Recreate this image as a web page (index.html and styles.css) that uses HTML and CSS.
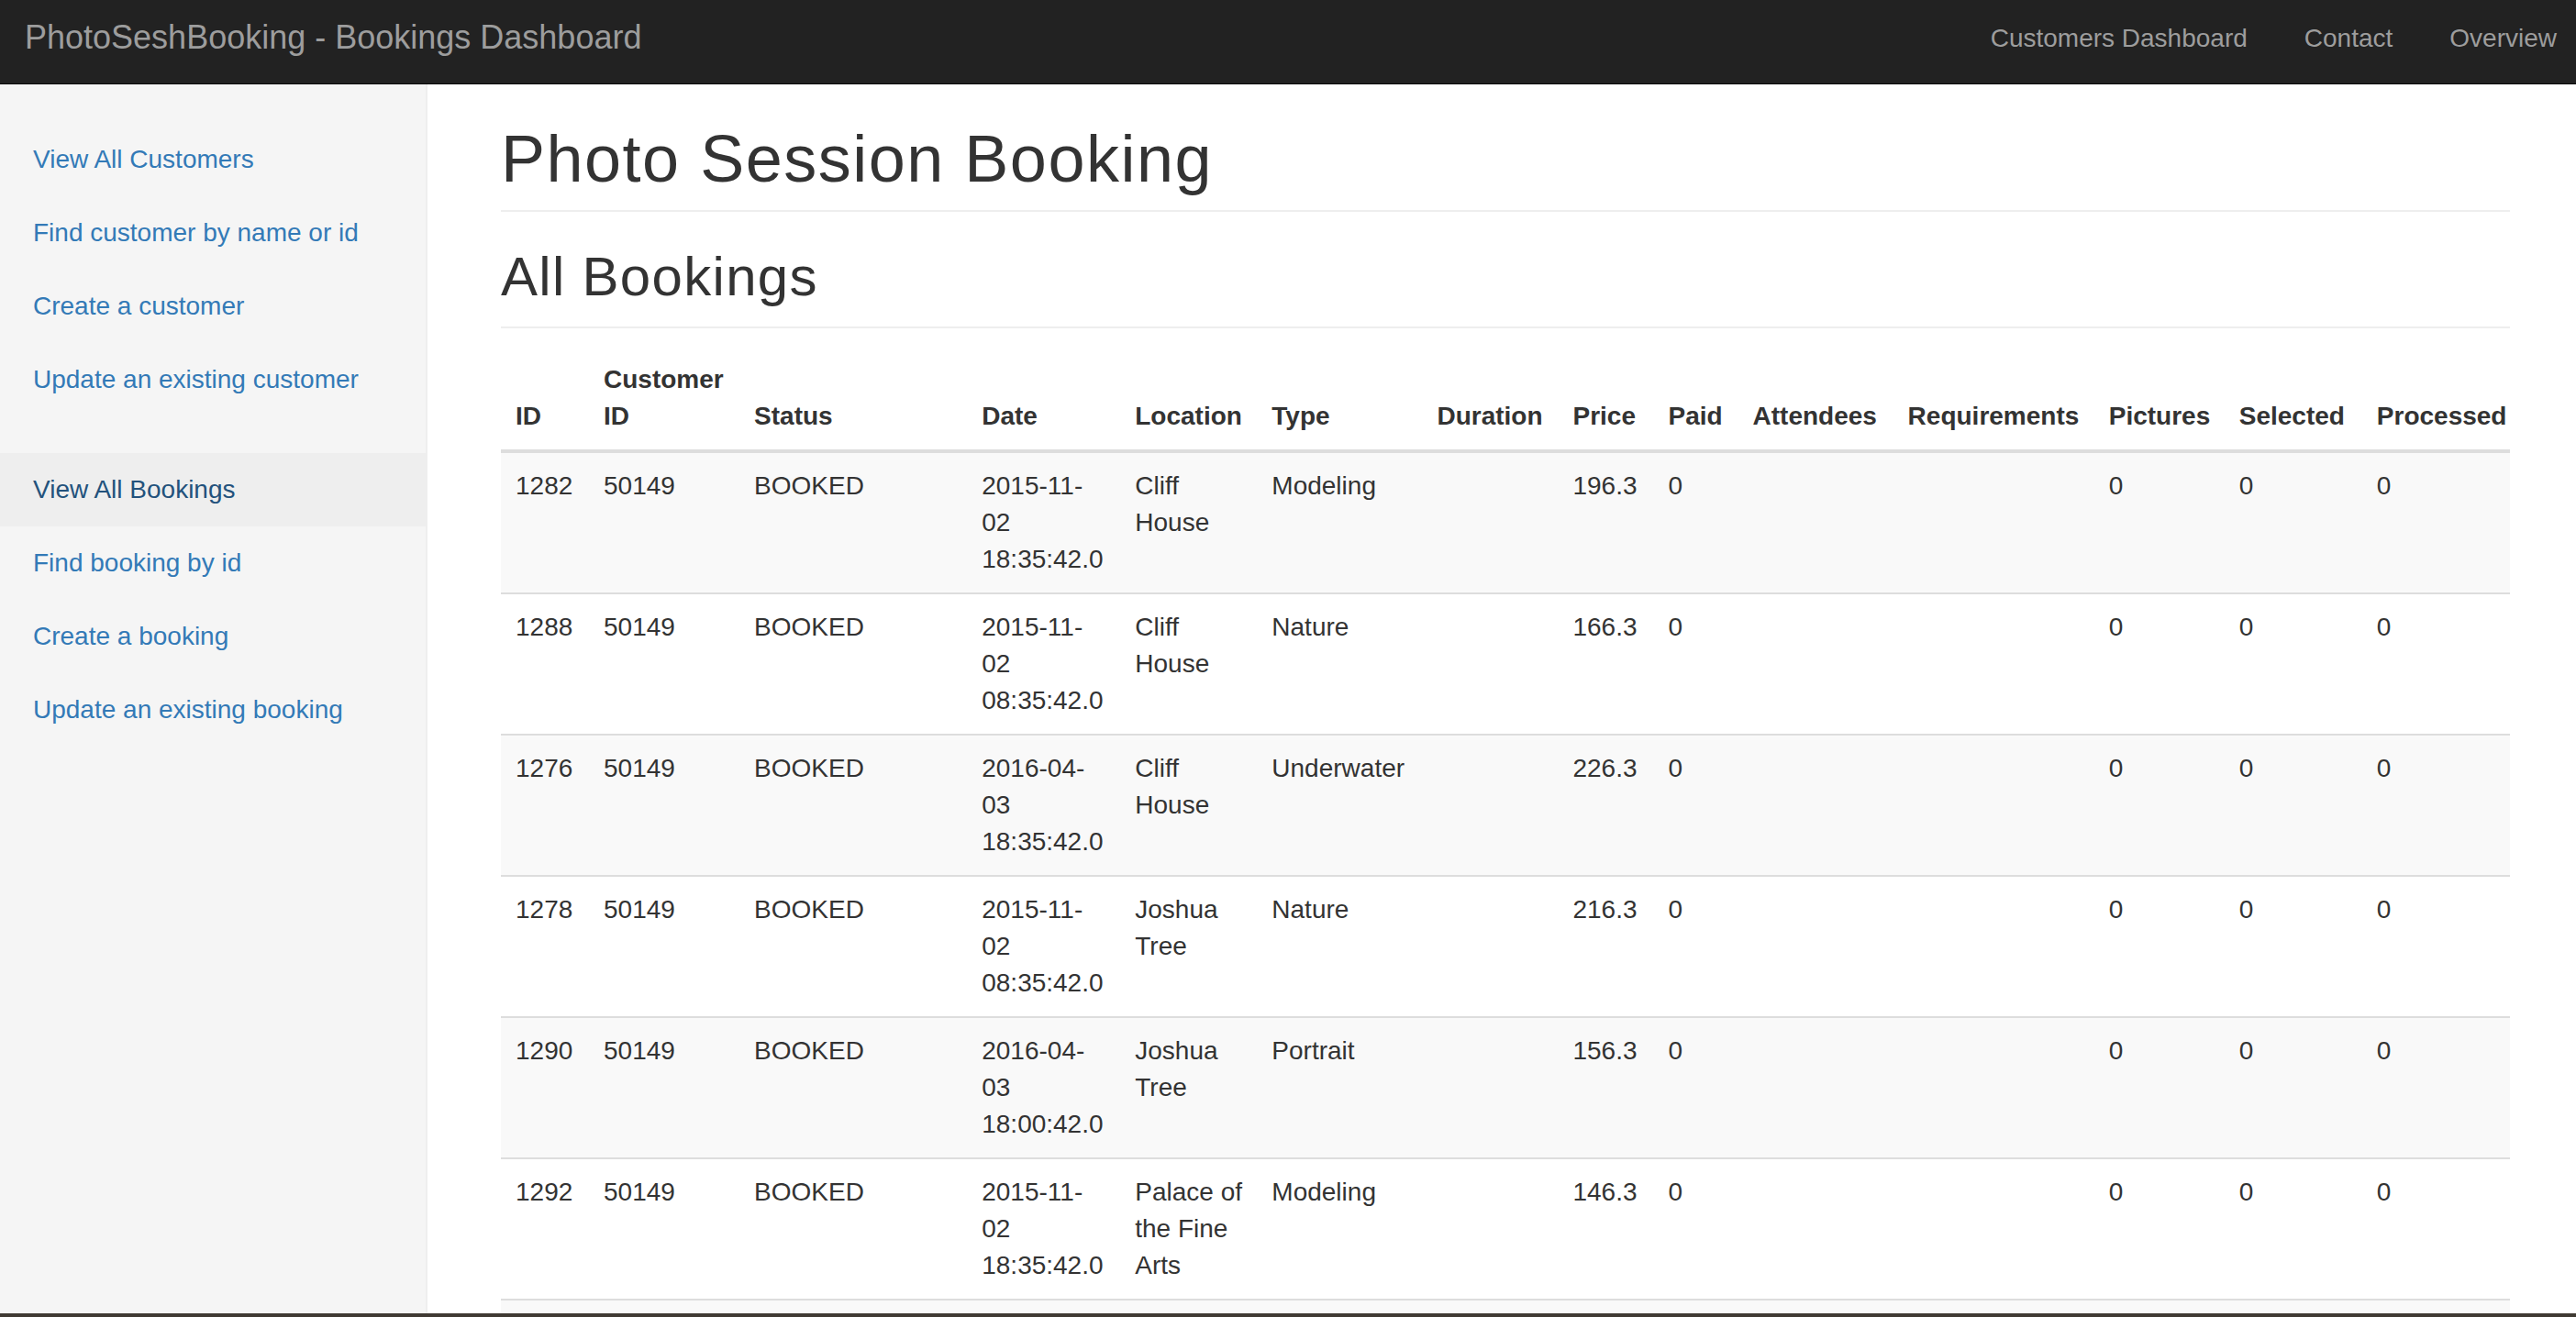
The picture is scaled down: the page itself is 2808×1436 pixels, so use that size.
FILE: index.html
```html
<!DOCTYPE html>
<html lang="en">
<head>
<meta charset="utf-8">
<title>PhotoSeshBooking - Bookings Dashboard</title>
<link rel="stylesheet" href="styles.css">
</head>
<body>
<header class="navbar">
  <a class="brand" href="#">PhotoSeshBooking - Bookings Dashboard</a>
  <ul class="topnav">
    <li><a href="#">Customers Dashboard</a></li>
    <li><a href="#">Contact</a></li>
    <li><a href="#">Overview</a></li>
  </ul>
</header>
<div class="layout">
  <aside class="sidebar">
    <ul class="side-nav">
      <li><a href="#">View All Customers</a></li>
      <li><a href="#">Find customer by name or id</a></li>
      <li><a href="#">Create a customer</a></li>
      <li><a href="#">Update an existing customer</a></li>
    </ul>
    <ul class="side-nav">
      <li class="hover"><a href="#">View All Bookings</a></li>
      <li><a href="#">Find booking by id</a></li>
      <li><a href="#">Create a booking</a></li>
      <li><a href="#">Update an existing booking</a></li>
    </ul>
  </aside>
  <main class="main">
    <h1 class="page-title">Photo Session Booking</h1>
    <h2 class="section-title">All Bookings</h2>
    <table class="bookings">
      <colgroup>
        <col class="c-id"><col class="c-cust"><col class="c-status"><col class="c-date"><col class="c-loc"><col class="c-type"><col class="c-dur"><col class="c-price"><col class="c-paid"><col class="c-att"><col class="c-req"><col class="c-pic"><col class="c-sel"><col class="c-proc">
      </colgroup>
      <thead>
        <tr><th>ID</th><th>Customer ID</th><th>Status</th><th>Date</th><th>Location</th><th>Type</th><th>Duration</th><th>Price</th><th>Paid</th><th>Attendees</th><th>Requirements</th><th>Pictures</th><th>Selected</th><th>Processed</th></tr>
      </thead>
      <tbody>
        <tr><td>1282</td><td>50149</td><td>BOOKED</td><td>2015-11-<wbr>02 18:35:42.0</td><td>Cliff House</td><td>Modeling</td><td></td><td>196.3</td><td>0</td><td></td><td></td><td>0</td><td>0</td><td>0</td></tr>
        <tr><td>1288</td><td>50149</td><td>BOOKED</td><td>2015-11-<wbr>02 08:35:42.0</td><td>Cliff House</td><td>Nature</td><td></td><td>166.3</td><td>0</td><td></td><td></td><td>0</td><td>0</td><td>0</td></tr>
        <tr><td>1276</td><td>50149</td><td>BOOKED</td><td>2016-04-<wbr>03 18:35:42.0</td><td>Cliff House</td><td>Underwater</td><td></td><td>226.3</td><td>0</td><td></td><td></td><td>0</td><td>0</td><td>0</td></tr>
        <tr><td>1278</td><td>50149</td><td>BOOKED</td><td>2015-11-<wbr>02 08:35:42.0</td><td>Joshua Tree</td><td>Nature</td><td></td><td>216.3</td><td>0</td><td></td><td></td><td>0</td><td>0</td><td>0</td></tr>
        <tr><td>1290</td><td>50149</td><td>BOOKED</td><td>2016-04-<wbr>03 18:00:42.0</td><td>Joshua Tree</td><td>Portrait</td><td></td><td>156.3</td><td>0</td><td></td><td></td><td>0</td><td>0</td><td>0</td></tr>
        <tr><td>1292</td><td>50149</td><td>BOOKED</td><td>2015-11-<wbr>02 18:35:42.0</td><td>Palace of the Fine Arts</td><td>Modeling</td><td></td><td>146.3</td><td>0</td><td></td><td></td><td>0</td><td>0</td><td>0</td></tr>
        <tr class="next-row"><td></td><td></td><td></td><td></td><td></td><td></td><td></td><td></td><td></td><td></td><td></td><td></td><td></td><td></td></tr>
      </tbody>
    </table>
  </main>
</div>
<div class="desk-edge"></div>
</body>
</html>
```
FILE: styles.css
```css
html, body {
  height: 100%;
  margin: 0;
  overflow: hidden;
}

body {
  font-family: "Liberation Sans", Arial, Helvetica, sans-serif;
  font-size: 28px;
  line-height: 40px;
  color: #333;
  background: #fff;
  display: flex;
  flex-direction: column;
}

.navbar {
  box-sizing: border-box;
  height: 92px;
  flex: none;
  background: #222;
  border-bottom: 1px solid #080808;
  display: flex;
  justify-content: space-between;
  align-items: flex-start;
  padding: 21px 21px 0 27px;
}

.brand {
  font-size: 36px;
  line-height: 40px;
  color: #9d9d9d;
  text-decoration: none;
}

.topnav {
  display: flex;
  gap: 62px;
  list-style: none;
  margin: 1px 0 0;
  padding: 0;
}

.topnav a {
  color: #9d9d9d;
  text-decoration: none;
  font-size: 28px;
  line-height: 40px;
}

.layout {
  flex: 1;
  display: flex;
  min-height: 0;
}

.sidebar {
  width: 464px;
  flex: none;
  background: #f5f5f5;
  border-right: 2px solid #eee;
  padding-top: 42px;
}

.side-nav {
  list-style: none;
  margin: 0 0 40px;
  padding: 0;
}

.side-nav a {
  display: block;
  padding: 20px 36px;
  color: #337ab7;
  text-decoration: none;
}

.side-nav .hover a {
  background: #eee;
  color: #23527c;
}

.main {
  flex: 1;
  min-width: 0;
  padding: 42px 72px 0 80px;
}

.page-title {
  margin: 0;
  font-size: 72px;
  line-height: 79px;
  font-weight: 500;
  letter-spacing: 1.5px;
  padding-bottom: 16px;
  border-bottom: 2px solid #eee;
}

.section-title {
  margin: 38px 0 0;
  font-size: 60px;
  line-height: 66px;
  font-weight: 500;
  letter-spacing: 1.3px;
  padding-bottom: 21px;
  border-bottom: 2px solid #eee;
}

.bookings {
  margin-top: 20px;
  width: 100%;
  table-layout: fixed;
  border-collapse: separate;
  border-spacing: 0;
}

.bookings th,
.bookings td {
  padding: 16px 14px 16px 16px;
  text-align: left;
  vertical-align: top;
}

.bookings th {
  vertical-align: bottom;
  font-weight: bold;
  border-bottom: 4px solid #ddd;
}

.bookings tbody tr + tr td {
  border-top: 2px solid #ddd;
}

.bookings tbody tr:nth-child(odd) td {
  background: #f9f9f9;
}

.bookings .next-row td {
  height: 120px;
}

.c-id { width: 96px; }
.c-cust { width: 164px; }
.c-status { width: 248px; }
.c-date { width: 167px; }
.c-loc { width: 149px; }
.c-type { width: 180px; }
.c-dur { width: 148px; }
.c-price { width: 104px; }
.c-paid { width: 92px; }
.c-att { width: 169px; }
.c-req { width: 219px; }
.c-pic { width: 142px; }
.c-sel { width: 150px; }
.c-proc { width: 161px; }

.desk-edge {
  position: fixed;
  left: 0;
  right: 0;
  bottom: 0;
  height: 4px;
  background: #403a33;
}
```
